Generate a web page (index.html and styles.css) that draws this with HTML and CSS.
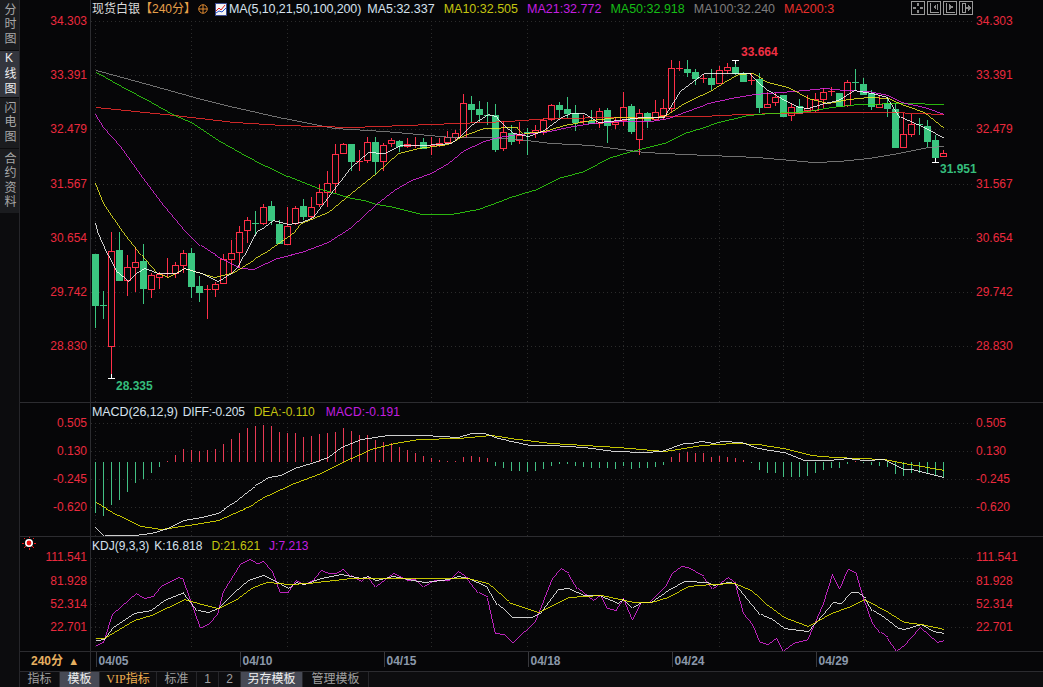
FILE: index.html
```html
<!DOCTYPE html>
<html>

	<head>
		<meta charset="UTF-8">
		<title>现货白银</title>
		<link rel="stylesheet" href="styles.css">
	</head>

	<body>
		<div class="app">
			<div class="side">
				<div class="side-tab tab-h50">分时图</div>
				<div class="side-tab tab-h47 active">K线图</div>
				<div class="side-tab tab-h50">闪电图</div>
				<div class="side-tab tab-h64">合约资料</div>
			</div>
			<div class="main">
				<div class="panel panel-price" id="price">
					<div class="legend legend-price">
						<span class="name">现货白银</span>
						<span class="period">【240分】</span>
						<svg class="zoom-icon" width="10" height="10" viewBox="0 0 10 10">
							<circle cx="5" cy="5" r="4.2" fill="none" stroke="#e08a30"/>
							<path d="M0.5 5H9.5M5 0.5V9.5" stroke="#e08a30"/>
						</svg>
						<svg class="ma-icon" width="12" height="13" viewBox="0 0 12 13">
							<rect x="0.5" y="0.5" width="11" height="12" fill="#f4f4f4" stroke="#3a4a90"/>
							<path d="M1 8L4 5L6 7L10 2" fill="none" stroke="#e02020"/>
							<path d="M1 10L4 8L7 9L11 5" fill="none" stroke="#2050d0"/>
						</svg>
						<span class="c-white ma-params">MA(5,10,21,50,100,200)</span>
						<span class="c-white">MA5:32.337</span>
						<span class="c-yellow">MA10:32.505</span>
						<span class="c-purple">MA21:32.772</span>
						<span class="c-green">MA50:32.918</span>
						<span class="c-gray">MA100:32.240</span>
						<span class="c-red">MA200:3</span>
					</div>
					<div class="tools">
						<svg width="14" height="14" viewBox="0 0 14 14"><rect x="0.5" y="0.5" width="13" height="13"/><path d="M6 2H8V5H6ZM6 9H8V12H6ZM2 6H5V8H2ZM9 6H12V8H9Z" class="solid"/></svg>
						<svg width="14" height="14" viewBox="0 0 14 14"><rect x="0.5" y="0.5" width="13" height="13"/><path d="M3.5 2V11.5H12"/><path d="M9 3V9L6 6Z M10 3H11V9H10Z" class="solid"/></svg>
						<svg width="14" height="14" viewBox="0 0 14 14"><rect x="0.5" y="0.5" width="13" height="13"/><path d="M3.5 2V11.5H12"/><path d="M6 3V9L11 6Z" class="solid"/></svg>
						<svg width="14" height="14" viewBox="0 0 14 14"><rect x="0.5" y="0.5" width="13" height="13"/><path d="M3.5 2.5H6.5V11.5H3.5Z"/><path d="M7 6H9V3.5L12.5 7L9 10.5V8H7Z" class="solid"/></svg>
					</div>
				</div>
				<div class="panel panel-macd" id="macd">
					<div class="legend legend-macd">
						<span class="c-white macd-params">MACD(26,12,9)</span>
						<span class="c-white diff">DIFF:-0.205</span>
						<span class="c-yellow">DEA:-0.110</span>
						<span class="c-purple macd-val">MACD:-0.191</span>
					</div>
				</div>
				<div class="panel panel-kdj" id="kdj">
					<div class="legend legend-kdj">
						<span class="c-white">KDJ(9,3,3)</span>
						<span class="c-white">K:16.818</span>
						<span class="c-yellow">D:21.621</span>
						<span class="c-purple">J:7.213</span>
					</div>
				</div>
				<div class="date-row">
					<div class="period-box">240分 <span class="arrow-up">▲</span></div>
					<div class="dates">
						<span>04/05</span>
						<span>04/10</span>
						<span>04/15</span>
						<span>04/18</span>
						<span>04/24</span>
						<span>04/29</span>
					</div>
				</div>
				<div class="tabs">
					<a class="tab w40">指标</a>
					<a class="tab w40 on">模板</a>
					<a class="tab w57 vip"><i>VIP</i>指标</a>
					<a class="tab w40">标准</a>
					<a class="tab w22">1</a>
					<a class="tab w22">2</a>
					<a class="tab w62 on">另存模板</a>
					<a class="tab w66">管理模板</a>
				</div>
			</div>
		</div>
		<script src="chart.js"></script>
	</body>

</html>
```
FILE: styles.css
```css
* {
	box-sizing: border-box;
}

html,
body {
	margin: 0;
	height: 100%;
	background: #060608;
	overflow: hidden;
}

body {
	font-family: "Liberation Sans", "Noto Sans CJK SC", sans-serif;
	font-size: 12px;
	color: #ddd;
}

.app {
	display: flex;
	width: 1043px;
	height: 687px;
}

.side {
	width: 20px;
	flex: none;
	background: #0c0c0e;
	border-right: 1px solid #26262a;
	display: flex;
	flex-direction: column;
	gap: 1px;
}

.side-tab {
	writing-mode: vertical-rl;
	text-orientation: upright;
	letter-spacing: 2.6px;
	display: flex;
	align-items: center;
	justify-content: center;
	background: #1b1c1f;
	color: #a8a8a8;
	font-size: 12px;
}

.side-tab.active {
	background: #34363e;
	color: #eee;
}

.tab-h50 {
	height: 50px;
}

.tab-h47 {
	height: 46px;
}

.tab-h64 {
	height: 64px;
}

.main {
	flex: 1;
	min-width: 0;
	display: flex;
	flex-direction: column;
}

.panel {
	position: relative;
	flex: none;
	border-bottom: 1px solid #2c2c30;
}

.panel svg.chart {
	display: block;
}

.panel-price {
	height: 403px;
}

.panel-macd {
	height: 134px;
}

.panel-kdj {
	height: 115px;
}

.legend {
	position: absolute;
	left: 72px;
	top: 1px;
	display: flex;
	align-items: center;
	white-space: nowrap;
	font-size: 12px;
	line-height: 16px;
}

.legend-price {
	font-size: 12.5px;
	gap: 9px;
}

.legend-macd {
	gap: 5px;
}

.macd-params {
	font-size: 12.5px;
	letter-spacing: -0.08px;
}

.diff {
	letter-spacing: -0.2px;
}

.macd-val {
	letter-spacing: 0.15px;
}

.legend-macd .c-yellow,
.legend-macd .c-purple,
.legend-kdj .c-yellow,
.legend-kdj .c-purple {
	margin-left: 4px;
}

.legend-macd .c-purple {
	margin-left: 6px;
}

.legend-kdj {
	gap: 5px;
}

.name {
	font-size: 12px;
	color: #dcdcdc;
}

.period {
	font-size: 12px;
	color: #e6a04a;
	margin-left: -9px;
	margin-right: -7px;
}

.zoom-icon {
	margin-right: -2px;
}

.ma-params {
	margin-left: -7px;
	margin-right: -3px;
	letter-spacing: -0.12px;
}

.c-white {
	color: #d6e2ee;
}

.c-yellow {
	color: #c4c410;
}

.c-purple {
	color: #c41ee0;
}

.c-green {
	color: #16bd16;
}

.c-gray {
	color: #7d7d7d;
}

.c-red {
	color: #e8302c;
}

.tools {
	position: absolute;
	top: 1px;
	right: 70px;
	display: flex;
	gap: 2px;
}

.tools rect,
.tools path {
	fill: none;
	stroke: #9a9a9a;
	shape-rendering: crispEdges;
}

.tools path.solid {
	fill: #8a8a8a;
	stroke: none;
}

/* chart contents, drawn by chart.js */
.hgrid,
.vgrid {
	stroke: #2b2b2b;
	stroke-dasharray: 1 3;
	shape-rendering: crispEdges;
}

.axis-line {
	stroke: #2c2c30;
	shape-rendering: crispEdges;
}

.axis-text {
	font-size: 12px;
	fill: #ea2a3e;
}

.mark-text {
	font-size: 12px;
	font-weight: bold;
}

.mark-up {
	fill: #f03044;
}

.mark-down {
	fill: #35bd7c;
}

.line {
	fill: none;
	stroke-width: 0.8;
	shape-rendering: crispEdges;
}

.candle {
	shape-rendering: crispEdges;
}

.date-row {
	display: flex;
	height: 20px;
	flex: none;
	border-bottom: 1px solid #2c2c30;
}

.period-box {
	width: 71px;
	flex: none;
	padding-left: 11px;
	line-height: 19px;
	font-weight: bold;
	color: #e6b060;
	border-right: 1px solid #2c2c30;
}

.arrow-up {
	font-size: 11px;
	margin-left: 2px;
}

.dates {
	display: flex;
	padding-left: 4.5px;
}

.dates span {
	width: 144px;
	height: 15px;
	padding-left: 2px;
	line-height: 18px;
	font-weight: bold;
	color: #8b98aa;
	border-left: 1px solid #38383c;
}

.tabs {
	display: flex;
	flex: none;
	height: 15px;
	line-height: 15px;
	background: #0d0d0f;
}

.tab {
	text-align: center;
	color: #a0a0a0;
	border-right: 1px solid #26262a;
}

.tab.on {
	background: #474a55;
	color: #f0f0f0;
}

.vip {
	color: #f0b050;
}

.vip i {
	font-family: "Liberation Serif", serif;
	font-style: normal;
}

.w22 {
	width: 22px;
}

.w40 {
	width: 40px;
}

.w57 {
	width: 57px;
}

.w62 {
	width: 62px;
}

.w66 {
	width: 66px;
}
```
FILE: chart.js
```js
// everything is in page pixels, a panel's svg viewBox is shifted to match
var NS = 'http://www.w3.org/2000/svg';
var RED = '#ff2f48', GREEN = '#3bc680';

function el(parent, name, attrs, text) {
	var e = document.createElementNS(NS, name);
	for (var k in attrs) e.setAttribute(k, attrs[k]);
	if (text) e.textContent = text;
	parent.appendChild(e);
	return e;
}

function makeSvg(id, top, height) {
	var box = document.getElementById(id);
	var svg = el(box, 'svg', {
		'class': 'chart',
		width: 1023,
		height: height,
		viewBox: '20 ' + top + ' 1023 ' + height
	});
	box.insertBefore(svg, box.firstChild);
	el(svg, 'line', { 'class': 'axis-line', x1: 90.5, x2: 90.5, y1: top, y2: top + height });
	return svg;
}

function grid(svg, ys, top, bottom) {
	ys.forEach(function(y) {
		el(svg, 'line', { 'class': 'hgrid', x1: 91, x2: 974, y1: y + 0.5, y2: y + 0.5 });
	});
	[95, 191, 287, 431, 527, 623, 719, 783, 863].forEach(function(x) {
		el(svg, 'line', { 'class': 'vgrid', x1: x + 0.5, x2: x + 0.5, y1: top, y2: bottom });
	});
}

function labels(svg, items) {
	items.forEach(function(it) {
		el(svg, 'text', { 'class': 'axis-text', x: 87, y: it[0] + 4, 'text-anchor': 'end' }, it[1]);
		el(svg, 'text', { 'class': 'axis-text', x: 976, y: it[0] + 4 }, it[1]);
	});
}

function line(svg, color, pts) {
	el(svg, 'polyline', { 'class': 'line', stroke: color, transform: 'translate(0.5 0.5)', points: pts.join(' ') });
}

// top, bottom, high, low, r/g; top == bottom is a doji
var candles = [
	[254,305,254,328,'g'],[305,305,291,319,'g'],[251,346,232,378,'r'],[250,280,232,280,'g'],[267,280,255,296,'r'],
	[262,267,247,292,'r'],[261,288,244,304,'g'],[275,289,273,298,'r'],[274,277,272,289,'r'],[273,273,258,278,'r'],
	[265,273,262,278,'r'],[253,265,250,273,'r'],[253,286,248,298,'g'],[286,292,276,302,'g'],[289,289,285,319,'r'],
	[284,289,282,297,'r'],[259,283,254,283,'r'],[253,259,240,273,'r'],[232,252,226,268,'r'],[220,230,217,243,'r'],
	[223,223,211,235,'g'],[207,223,204,225,'r'],[206,220,201,225,'g'],[224,243,220,243,'g'],[226,244,207,244,'r'],
	[208,223,206,225,'r'],[206,216,199,220,'g'],[207,216,197,220,'r'],[192,204,184,207,'r'],[183,192,171,207,'r'],
	[154,183,144,193,'r'],[144,153,143,154,'r'],[144,161,144,171,'g'],[161,161,150,171,'r'],[142,160,137,163,'r'],
	[142,161,137,175,'g'],[145,161,143,171,'r'],[140,143,138,147,'r'],[141,146,140,152,'g'],[144,146,138,148,'r'],
	[145,145,137,148,'r'],[142,148,138,148,'g'],[145,145,137,155,'r'],[143,145,138,147,'r'],[137,142,131,143,'r'],
	[133,137,130,140,'r'],[103,137,94,137,'r'],[104,109,96,123,'g'],[109,114,101,122,'g'],[115,115,102,125,'g'],
	[115,149,104,152,'g'],[132,148,121,151,'r'],[133,141,125,145,'g'],[135,140,122,144,'r'],[132,132,128,155,'g'],
	[130,132,125,138,'r'],[120,131,118,135,'r'],[105,119,104,121,'r'],[105,109,102,118,'g'],[109,113,97,118,'g'],
	[113,122,105,131,'g'],[121,121,115,125,'r'],[121,123,110,124,'g'],[111,123,108,128,'r'],[110,125,108,143,'g'],
	[122,124,117,129,'r'],[107,120,92,126,'r'],[106,131,104,134,'g'],[113,139,109,155,'r'],[113,120,112,128,'g'],
	[112,119,100,121,'r'],[108,115,99,120,'r'],[68,108,60,112,'r'],[68,68,61,71,'r'],[69,72,60,77,'g'],
	[72,78,69,85,'g'],[78,78,74,83,'r'],[78,84,69,90,'g'],[70,83,66,83,'r'],[67,70,63,74,'r'],
	[67,73,60,75,'g'],[73,81,72,81,'g'],[80,80,73,85,'r'],[79,107,73,113,'g'],[104,107,92,107,'r'],
	[97,102,93,106,'r'],[95,116,95,116,'g'],[107,115,103,121,'r'],[106,113,99,113,'g'],[108,110,95,112,'r'],
	[99,110,93,112,'r'],[92,99,88,108,'r'],[91,91,87,96,'r'],[93,106,93,107,'g'],[82,105,80,107,'r'],
	[82,82,69,90,'g'],[84,94,78,95,'g'],[93,106,90,110,'g'],[104,107,95,108,'r'],[103,108,97,117,'g'],
	[109,147,103,147,'g'],[134,147,113,148,'r'],[124,134,114,137,'r'],[124,124,118,135,'g'],[126,141,120,147,'g'],
	[140,157,135,162,'g'],[153,156,150,157,'r']
];

function drawCandles(svg) {
	candles.forEach(function(c, i) {
		var x = 95 + 8 * i, color = c[4] === 'r' ? RED : GREEN;
		var g = el(svg, 'g', { 'class': 'candle' });
		el(g, 'line', { stroke: color, x1: x + 0.5, x2: x + 0.5, y1: c[2], y2: c[3] });
		if (c[0] === c[1]) {
			el(g, 'line', { stroke: color, x1: x - 3, x2: x + 4, y1: c[0] + 0.5, y2: c[0] + 0.5 });
		} else if (c[4] === 'r') {
			el(g, 'rect', { x: x - 2.5, y: c[0] + 0.5, width: 6, height: c[1] - c[0], fill: '#060608', stroke: color });
		} else {
			el(g, 'rect', { x: x - 3, y: c[0], width: 7, height: c[1] - c[0] + 1, fill: color });
		}
	});
}

function mark(svg, x, y, text, tx, ty, cls) {
	var g = el(svg, 'g', { 'class': 'candle' });
	el(g, 'line', { stroke: '#fff', x1: x + 0.5, x2: x + 0.5, y1: y, y2: y + (cls === 'mark-up' ? 4 : -4) });
	el(g, 'line', { stroke: '#fff', x1: x - 3, x2: x + 4, y1: y + 0.5, y2: y + 0.5 });
	el(svg, 'text', { 'class': 'mark-text ' + cls, x: tx, y: ty }, text);
}

// price panel
var price = makeSvg('price', 0, 402);
grid(price, [21, 75, 129, 184, 238, 292, 346], 21, 402);
labels(price, [[21,'34.303'],[75,'33.391'],[129,'32.479'],[184,'31.567'],[238,'30.654'],[292,'29.742'],[346,'28.830']]);
drawCandles(price);
line(price, '#8c8c8c', [95,70,150,85,193,97,233,107,283,118,333,128,383,131,417,134,450,137,483,137,517,139,550,143,590,145,643,152,683,154,757,157,813,162,837,161,867,158,897,153,927,147,943,146]);
line(price, '#ff3030', [95,107,173,115,233,122,283,125,350,127,430,124,507,121,550,118,617,117,700,116,740,114,823,112,890,112,943,114]);
line(price, '#33e010', [95,72,120,86,150,102,173,115,190,122,217,140,247,157,287,176,317,188,350,198,363,200,375,204,393,207,420,214,450,214,477,209,507,198,533,190,557,178,583,171,607,158,630,151,663,143,683,133,700,128,717,122,747,115,770,113,807,111,830,107,857,104,903,103,943,104]);
line(price, '#ea2bea', [95,113,103,126,120,145,140,173,160,200,185,230,200,245,220,258,240,268,253,269,277,258,300,252,327,242,350,227,375,204,393,190,410,180,430,173,447,163,463,150,483,141,497,137,517,134,543,132,567,127,590,123,617,121,650,121,667,118,683,112,700,106,707,103,730,98,753,94,780,92,803,90,823,88,843,90,867,91,887,95,900,102,923,107,943,114]);
line(price, '#f2f226', [95,182,103,202,122,230,140,253,157,273,167,277,183,268,213,277,233,272,263,253,293,232,300,223,327,212,350,193,375,173,397,153,417,148,447,144,463,135,483,128,517,127,523,133,543,131,563,125,590,120,617,117,650,118,665,115,683,103,700,95,707,92,723,82,737,74,752,73,767,82,787,87,807,98,827,103,847,99,867,97,887,98,903,105,923,112,943,128]);
line(price, '#ffffff', [95,222,97,230,107,253,117,272,127,281,135,273,143,268,157,273,175,273,183,268,200,273,217,281,230,273,238,265,248,247,257,230,263,227,272,220,287,224,300,222,312,217,330,193,350,167,367,152,383,153,400,145,423,145,450,143,460,135,470,125,487,114,497,117,513,133,527,136,543,130,560,117,570,113,583,113,597,122,617,120,640,117,663,117,680,90,700,75,703,73,727,73,750,73,767,90,780,98,797,107,807,108,823,103,837,100,853,90,870,93,887,97,900,117,923,127,943,138]);
mark(price, 735, 60, '33.664', 741, 56, 'mark-up');
mark(price, 111, 378, '28.335', 116, 390, 'mark-down');
mark(price, 935, 162, '31.951', 940, 173, 'mark-down');

// macd panel, bars hang off the zero line at y=462
var macd = makeSvg('macd', 403, 133);
grid(macd, [423, 451, 479, 507], 423, 536);
labels(macd, [[423,'0.505'],[451,'0.130'],[479,'-0.245'],[507,'-0.620']]);
var hist = [340,348,315,300,275,250,238,220,202,182,165,148,150,152,150,147,133,117,100,85,79,75,78,95,100,100,110,108,103,100,95,85,92,105,105,120,125,130,140,150,158,167,175,180,183,183,170,168,170,173,198,205,212,214,216,212,207,197,192,191,198,201,203,204,205,207,198,207,205,204,202,195,170,160,156,158,160,170,168,170,175,180,190,210,218,218,230,231,231,228,218,210,204,204,192,182,188,195,198,202,222,227,220,218,222,228,232];
hist.forEach(function(v, i) {
	var x = 95.5 + 8 * i, y = 400 + Math.round(v / 3);
	el(macd, 'line', { 'class': 'candle', stroke: y < 462 ? '#e83a54' : '#42c084', x1: x, x2: x, y1: 462, y2: y });
});
line(macd, '#f2f200', [95,502,117,515,140,526,160,529,187,525,217,520,247,507,267,495,293,483,317,474,350,458,370,449,393,443,417,439,457,438,490,435,517,439,550,443,617,447,663,451,683,448,700,445,733,443,757,444,783,448,810,455,833,457,883,459,903,463,943,470]);
line(macd, '#ffffff', [95,526,104,535,133,535,150,533,167,528,182,520,200,517,217,513,232,503,247,491,258,483,267,477,280,475,293,468,310,463,327,457,340,447,350,443,360,439,387,435,423,435,457,437,470,433,483,433,497,438,530,445,550,445,583,447,613,451,643,452,660,451,683,443,690,443,700,441,713,443,720,441,740,442,757,448,783,452,803,460,827,460,847,458,863,460,883,459,903,469,910,469,943,477]);

// kdj panel
var kdj = makeSvg('kdj', 537, 114);
grid(kdj, [558, 581, 604, 627], 558, 650);
labels(kdj, [[557,'111.541'],[581,'81.928'],[604,'52.314'],[627,'22.701']]);
line(kdj, '#ea2bea', [95,645,103,641,112,613,135,593,143,598,152,596,160,586,177,577,183,579,200,627,208,623,217,613,223,590,240,563,248,559,257,563,263,560,272,570,280,592,287,592,295,580,303,584,312,580,320,570,328,573,335,573,343,568,350,575,360,581,367,575,375,586,392,573,407,580,415,578,423,586,433,580,448,580,457,571,467,578,478,592,487,597,495,633,503,634,512,642,535,620,552,577,560,568,568,573,577,588,592,600,600,594,607,608,615,610,623,597,632,619,640,602,648,602,665,585,672,572,680,566,687,567,703,576,712,588,727,577,735,583,743,612,752,623,760,642,767,644,776,637,783,650,792,643,807,639,823,602,832,573,839,588,847,569,856,573,863,597,872,622,880,632,887,637,896,650,903,645,919,627,936,642,943,640]);
line(kdj, '#ffffff', [95,640,103,639,112,627,133,613,150,610,163,600,183,592,197,610,207,612,217,608,233,592,247,580,263,575,273,580,287,588,295,582,303,584,320,578,340,574,350,576,360,578,367,576,375,580,392,576,407,579,423,582,447,579,457,576,467,578,487,587,497,604,512,617,530,617,540,612,557,589,567,588,583,595,598,595,617,603,623,598,632,607,640,602,650,602,667,590,683,581,707,582,712,585,727,582,735,583,747,598,760,614,770,618,783,628,807,631,823,613,832,602,840,603,850,592,857,592,865,598,872,610,883,617,897,628,903,629,920,624,932,631,943,633]);
line(kdj, '#f2f200', [95,638,103,638,133,620,150,615,167,607,183,599,197,603,217,608,237,598,250,588,267,582,287,584,307,583,350,578,467,578,487,583,510,603,537,612,567,597,600,595,633,602,650,602,667,597,687,586,710,584,733,583,750,590,767,605,783,617,807,626,830,613,847,607,863,599,887,612,903,622,920,624,943,629]);

// the small indicator dot left of the kdj legend
el(kdj, 'circle', { cx: 29, cy: 543, r: 3.2, fill: '#e81010', stroke: '#fff', 'stroke-width': 1.6 });
el(kdj, 'path', { d: 'M29.5 536V538M29.5 548V550M22 543.5H24M34 543.5H36M24 538L25.5 539.5M34 538L32.5 539.5M24 548L25.5 546.5M34 548L32.5 546.5', stroke: '#f01818', fill: 'none', 'class': 'candle' });
```
